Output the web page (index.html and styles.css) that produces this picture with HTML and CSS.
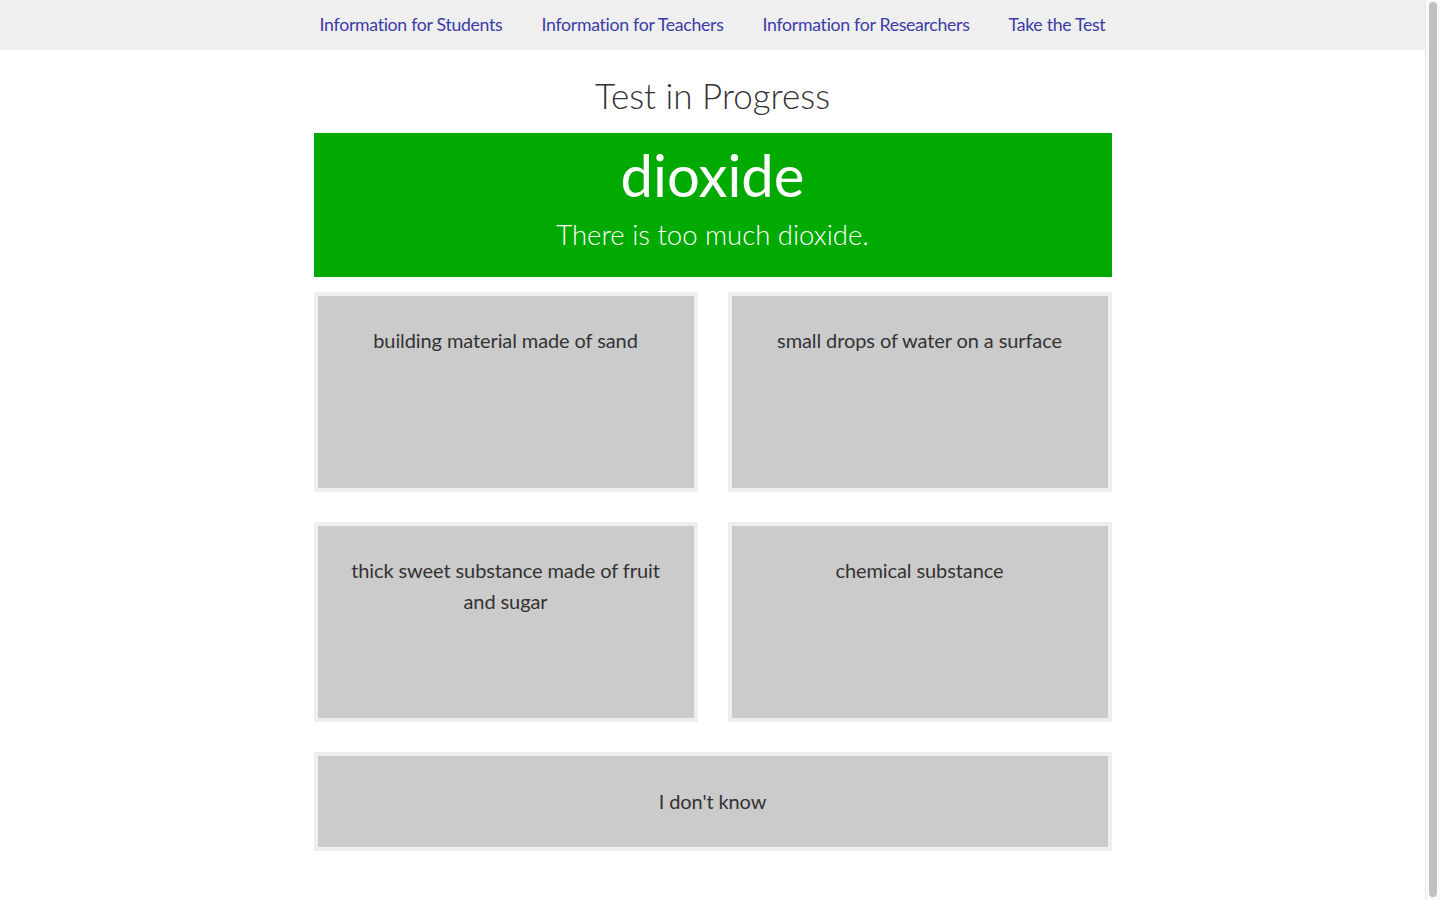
FILE: index.html
```html
<!DOCTYPE html>
<html lang="en">
<head>
<meta charset="utf-8">
<title>Test in Progress</title>
<link rel="stylesheet" href="styles.css">
</head>
<body>
<div class="page">
  <nav class="nav">
    <a href="#">Information for Students</a>
    <a href="#">Information for Teachers</a>
    <a href="#">Information for Researchers</a>
    <a href="#">Take the Test</a>
  </nav>
  <main class="container">
    <h1 class="title">Test in Progress</h1>
    <section class="word">
      <div class="word-main">dioxide</div>
      <div class="word-sentence">There is too much dioxide.</div>
    </section>
    <div class="choices">
      <button class="choice">building material made of sand</button>
      <button class="choice">small drops of water on a surface</button>
      <button class="choice">thick sweet substance made of fruit and sugar</button>
      <button class="choice">chemical substance</button>
      <button class="choice choice-wide">I don't know</button>
    </div>
  </main>
</div>
<div class="scrollbar"><div class="thumb"></div></div>
</body>
</html>
```
FILE: styles.css
```css
html, body {
  margin: 0;
  padding: 0;
  background: #ffffff;
}
body {
  font-family: Lato, "Open Sans", sans-serif;
  color: #333333;
  overflow: hidden;
}
.page {
  width: 1425px;
  min-height: 900px;
}
.nav {
  height: 50px;
  background: #efefef;
  display: flex;
  justify-content: center;
  align-items: center;
  gap: 39px;
  padding-bottom: 1px;
  box-sizing: border-box;
}
.nav a {
  color: #3c3ca6;
  text-decoration: none;
  font-size: 17.7px;
  letter-spacing: -0.3px;
}
.container {
  width: 798px;
  margin: 0 auto;
  display: flex;
  flex-direction: column;
}
.title {
  margin: 23px 0 16px;
  font-size: 35px;
  font-weight: 300;
  text-align: center;
  line-height: 44px;
  color: #333;
}
.word {
  background: #00aa00;
  color: #fff;
  height: 144px;
  text-align: center;
  box-sizing: border-box;
  padding-top: 8px;
}
.word-main {
  font-size: 58px;
  line-height: 68px;
  font-weight: 400;
}
.word-sentence {
  font-size: 27.5px;
  font-weight: 300;
  line-height: 40px;
  margin-top: 6px;
}
.choices {
  margin-top: 15px;
  display: grid;
  grid-template-columns: 1fr 1fr;
  column-gap: 30px;
  row-gap: 30px;
}
.choice {
  height: 200px;
  background: #cbcbcb;
  border: 4px solid #efefef;
  font-family: Lato, "Open Sans", sans-serif;
  font-size: 20px;
  letter-spacing: -0.1px;
  line-height: 31px;
  color: #333;
  padding: 29px 30px 0;
  display: flex;
  align-items: flex-start;
  justify-content: center;
  text-align: center;
  cursor: pointer;
}
.choice-wide {
  grid-column: 1 / span 2;
  height: 99px;
  padding-top: 0;
  align-items: center;
}
.scrollbar {
  position: fixed;
  top: 0;
  right: 0;
  width: 15px;
  height: 900px;
  background: #fafafa;
  border-left: 1px solid #e8e8e8;
  box-sizing: border-box;
}
.thumb {
  position: absolute;
  top: 2px;
  bottom: 3px;
  left: 3px;
  width: 8px;
  border-radius: 4px;
  background: #c1c1c1;
}
```
